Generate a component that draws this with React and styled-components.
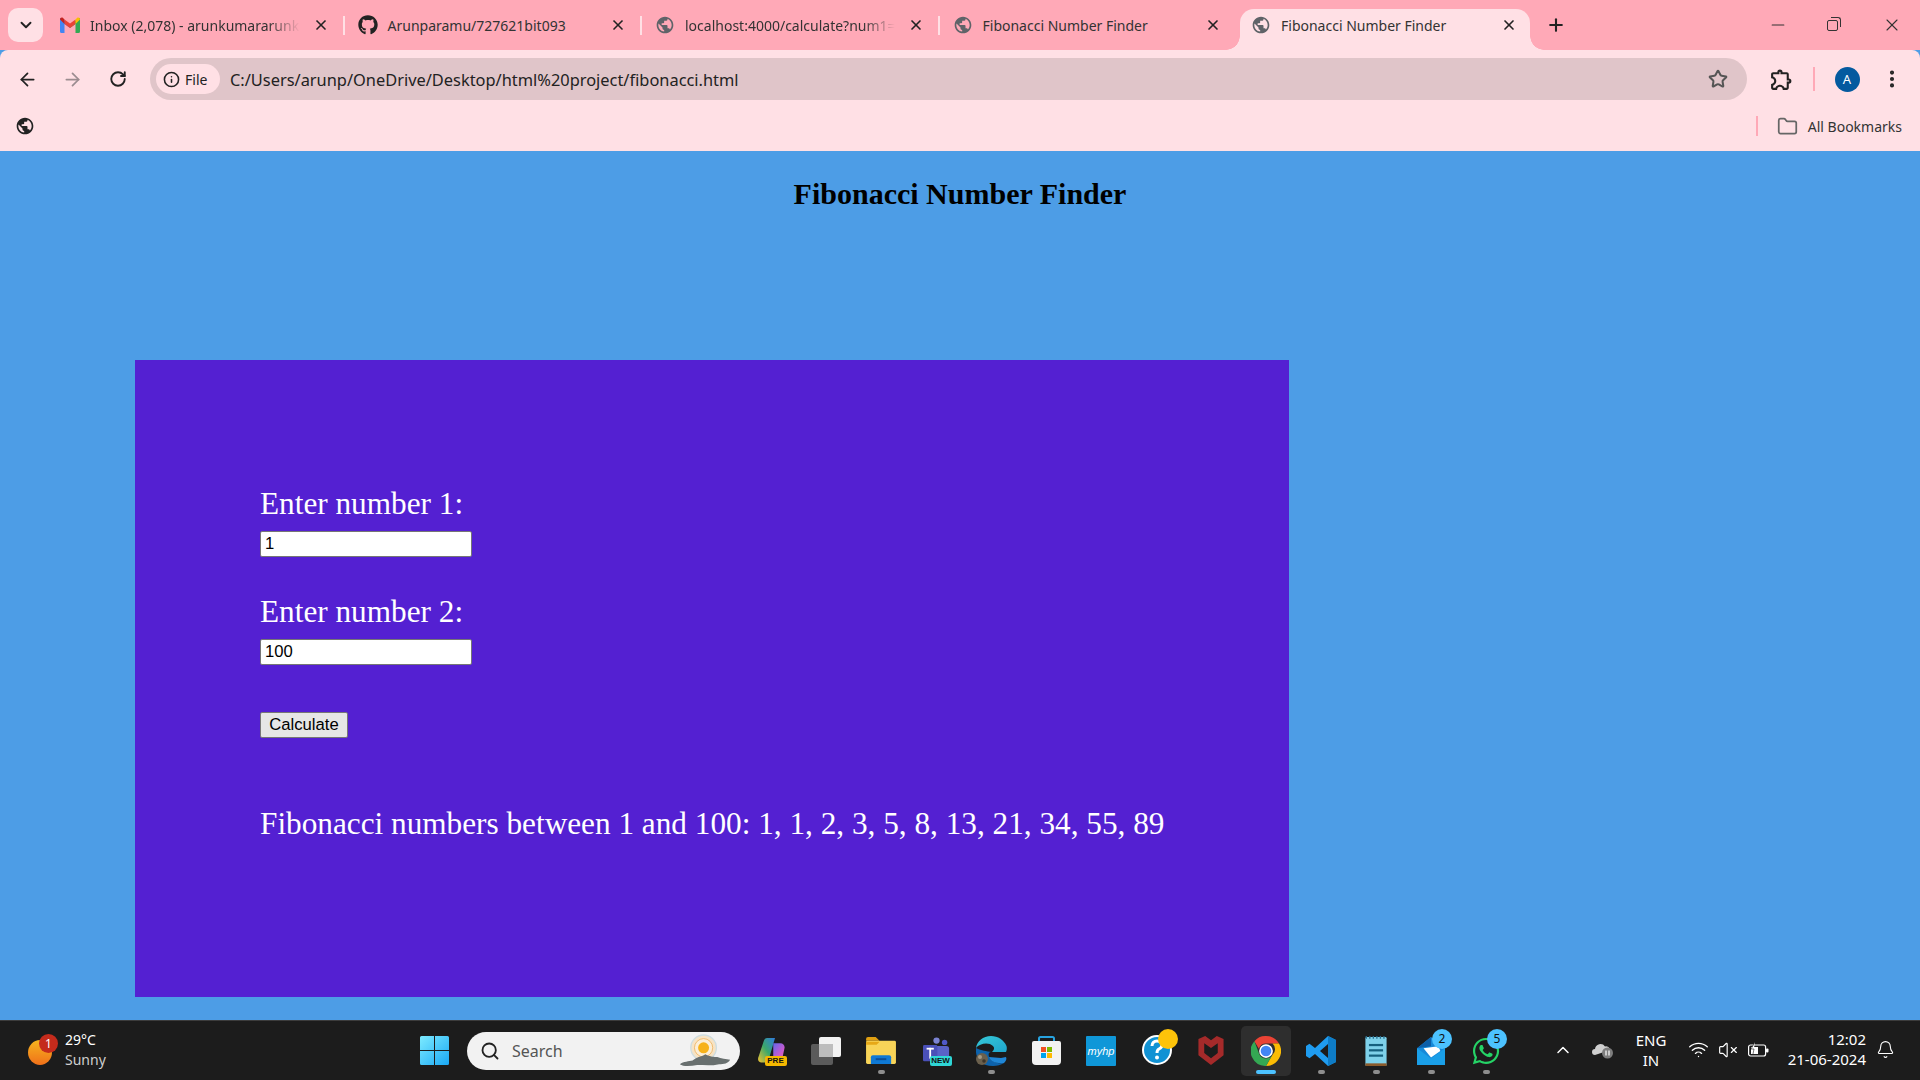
import React from 'react';
import styled, { createGlobalStyle } from 'styled-components';
import {
  ArrowLeft, ArrowRight, RotateCw, Info, Star, EllipsisVertical, X, Plus, Minus,
  ChevronDown, ChevronUp, Folder, Search, Wifi, VolumeX, Bell,
} from 'lucide-react';
import { MdPublic, MdOutlineExtension } from 'react-icons/md';
import { FaGithub, FaWhatsapp } from 'react-icons/fa';

const STRIP = '#ffa9b7';
const TOOLBAR = '#ffe0e5';

const GlobalStyle = createGlobalStyle`
  html, body {
    margin: 0;
    height: 100%;
    overflow: hidden;
  }
  * { box-sizing: border-box; }
`;

const Screen = styled.div`
  display: flex;
  flex-direction: column;
  width: 1920px;
  height: 1080px;
  font-family: "Noto Sans", "Open Sans", sans-serif;
  background: #4d9de6;
`;

const TabStrip = styled.div`
  display: flex;
  align-items: flex-end;
  height: 50px;
  padding-left: 8px;
  background: ${STRIP};
`;

const TabSearch = styled.div`
  display: flex;
  align-items: center;
  justify-content: center;
  align-self: flex-start;
  width: 35px;
  height: 34px;
  margin: 8px 4px 0 0;
  border-radius: 10px;
  background: ${TOOLBAR};
  color: #222;
`;

const Tab = styled.div`
  position: relative;
  display: flex;
  align-items: center;
  width: ${p => (p.$active ? '290px' : '297.5px')};
  height: 41px;
  margin-left: ${p => (p.$active ? '3px' : '0')};
  padding: 0 ${p => (p.$active ? '13px' : '16px')} 9px ${p => (p.$active ? '11px' : '13px')};
  border-radius: ${p => (p.$active ? '14px 14px 0 0' : '0')};
  background: ${p => (p.$active ? TOOLBAR : 'transparent')};
  color: #333;
  font-size: 14px;

  ${p => p.$sep && `
    &::after {
      content: '';
      position: absolute;
      top: 7px;
      right: 0;
      width: 2px;
      height: 19px;
      background: ${TOOLBAR};
    }
  `}

  ${p => p.$active && `
    &::before, &::after {
      content: '';
      position: absolute;
      bottom: 0;
      width: 14px;
      height: 14px;
    }
    &::before {
      left: -14px;
      background: radial-gradient(circle at 0 0, transparent 13.5px, ${TOOLBAR} 14px);
    }
    &::after {
      right: -14px;
      background: radial-gradient(circle at 100% 0, transparent 13.5px, ${TOOLBAR} 14px);
    }
  `}
`;

const TabIcon = styled.span`
  display: flex;
  flex: none;
  width: 20px;
  margin-right: 10px;
  color: #5f6368;
`;

const TabLabel = styled.span`
  flex: 1;
  white-space: nowrap;
  ${p => p.$fade && `
    mask-image: linear-gradient(to right, #000 178px, transparent 210px);
  `}
`;

const TabClose = styled.span`
  display: flex;
  flex: none;
  width: 16px;
  margin-left: 8px;
  color: #222;
`;

const NewTab = styled.div`
  display: flex;
  align-self: center;
  margin: 0 0 0 16px;
  color: #222;
`;

const WindowControls = styled.div`
  display: flex;
  align-self: flex-start;
  margin-left: auto;
  padding-top: 15px;
`;

const WindowButton = styled.div`
  display: flex;
  justify-content: center;
  width: 57px;
  color: #333;
`;

const RestoreIcon = styled.div`
  position: relative;
  width: 11px;
  height: 11px;
  margin: 5px 4px 0 0;
  border: 1px solid #333;
  border-radius: 2px;

  &::after {
    content: '';
    position: absolute;
    top: -4px;
    right: -4px;
    width: 9px;
    height: 9px;
    border-top: 1px solid #333;
    border-right: 1px solid #333;
    border-radius: 0 3px 0 0;
  }
`;

const Toolbar = styled.div`
  display: flex;
  align-items: center;
  height: 54px;
  padding: 8px 17px 4px 4.5px;
  border-radius: 8px 8px 0 0;
  background: ${TOOLBAR};
`;

const NavButton = styled.div`
  display: flex;
  justify-content: center;
  width: 45.5px;
  color: ${p => (p.$off ? '#9b8c90' : '#222')};
`;

const Omnibox = styled.div`
  display: flex;
  align-items: center;
  flex: 1;
  height: 42px;
  margin-left: 9px;
  padding: 0 19px 0 6px;
  border-radius: 21px;
  background: #e0c5c9;
  color: #222;
  font-size: 16.4px;
`;

const SiteChip = styled.div`
  display: flex;
  align-items: center;
  gap: 5px;
  width: 64px;
  height: 30px;
  margin-right: 10px;
  padding-left: 7px;
  border-radius: 15px;
  background: ${TOOLBAR};
  font-size: 14px;
`;

const Url = styled.span`
  flex: 1;
  white-space: nowrap;
`;

const ToolIcon = styled.div`
  display: flex;
  justify-content: center;
  width: 44px;
  margin-left: 12px;
  color: #222;
`;

const Divider = styled.div`
  flex: none;
  width: 2px;
  height: ${p => p.$h || 24}px;
  margin-left: ${p => p.$ml || 0};
  background: ${STRIP};
`;

const Avatar = styled.div`
  display: flex;
  align-items: center;
  justify-content: center;
  width: 25px;
  height: 25px;
  margin: 0 21.5px 0 19.5px;
  border-radius: 50%;
  background: #045a9f;
  color: #fff;
  font-size: 13px;
`;

const Dots = styled.div`
  display: flex;
  color: #222;
`;

const BookmarksBar = styled.div`
  display: flex;
  align-items: center;
  height: 47px;
  padding: 0 18px 3px 15px;
  background: ${TOOLBAR};
  color: #333;
  font-size: 14px;
`;

const BookmarkGlobe = styled.div`
  display: flex;
  color: #222;
`;

const AllBookmarks = styled.div`
  display: flex;
  align-items: center;
  gap: 10px;
  margin-left: 19px;
  color: #333;
`;

const Page = styled.main`
  flex: 1;
  min-height: 0;
  background: #4d9de6;
  font-family: "Liberation Serif", "Times New Roman", serif;
`;

const Title = styled.h1`
  margin: 0;
  padding-top: 25px;
  color: #000;
  font-size: 30px;
  font-weight: 700;
  line-height: 35px;
  text-align: center;
`;

const Panel = styled.form`
  width: 1154px;
  height: 637px;
  margin: 149px 0 0 135px;
  padding: 126px 0 0 125px;
  background: #5420d2;
  color: #fff;
`;

const FieldLabel = styled.label`
  display: block;
  font-size: 31.25px;
  line-height: 36px;
`;

const NumberInput = styled.input`
  display: block;
  width: 212px;
  height: 26px;
  margin: 9px 0 37px;
  padding: 0 4px;
  border: 1px solid #767676;
  border-radius: 2px;
  background: #fff;
  color: #000;
  font-family: "Liberation Sans", Arial, sans-serif;
  font-size: 16.67px;
`;

const CalcButton = styled.button`
  display: block;
  width: 88px;
  height: 26px;
  margin-top: 47px;
  padding: 0;
  border: 1px solid #767676;
  border-radius: 2px;
  background: #e6e6e6;
  color: #000;
  font-family: "Liberation Sans", Arial, sans-serif;
  font-size: 16.67px;
`;

const Result = styled.p`
  margin: 67px 0 0;
  font-size: 31.25px;
  line-height: 37px;
  white-space: nowrap;
`;

const Taskbar = styled.footer`
  display: flex;
  align-items: center;
  flex: none;
  height: 60px;
  border-top: 1px solid #3c3c3c;
  background: #1c1c1c;
  color: #fff;
  font-family: "Noto Sans", "Open Sans", sans-serif;
`;

const Weather = styled.div`
  display: flex;
  align-items: center;
  width: 420px;
  padding-left: 28px;
`;

const WeatherIcon = styled.div`
  position: relative;
  flex: none;
  width: 24px;
  height: 25px;
  margin-top: 4px;
  margin-right: 13px;
  border-radius: 50%;
  background: linear-gradient(#f6b51e, #f0701a);
`;

const CountBadge = styled.span`
  position: absolute;
  top: ${p => p.$top}px;
  right: ${p => p.$right}px;
  display: flex;
  align-items: center;
  justify-content: center;
  width: ${p => p.$size}px;
  height: ${p => p.$size}px;
  border-radius: 50%;
  background: ${p => p.$bg};
  color: ${p => p.$fg};
  font-size: 12px;
  line-height: 1;
`;

const WeatherText = styled.div`
  margin-bottom: 2px;
  font-size: 14px;
  line-height: 20px;
`;

const WeatherSub = styled.div`
  color: #cfcfcf;
`;

const StartButton = styled.div`
  display: flex;
  flex: none;
  width: 47px;
`;

const SearchBox = styled.div`
  display: flex;
  align-items: center;
  flex: none;
  width: 273px;
  height: 38px;
  padding: 0 9px 0 13px;
  border-radius: 19px;
  background: #f2f2f2;
  color: #555;
  font-size: 16px;
`;

const SearchIcon = styled.div`
  display: flex;
  margin-right: 12px;
  color: #222;
`;

const SearchArt = styled.div`
  display: flex;
  margin-left: auto;
`;

const TaskIcons = styled.div`
  display: flex;
  margin-left: 3.5px;
`;

const TaskItem = styled.div`
  position: relative;
  display: flex;
  align-items: center;
  justify-content: center;
  width: 55px;
  height: 52px;
  padding: ${p => (p.$raised ? '0 0 7px 7px' : '0')};

  ${p => p.$active && `
    &::before {
      content: '';
      position: absolute;
      inset: 1px 2.5px;
      border-radius: 5px;
      background: #2e2e2e;
    }
  `}

  & > svg { position: relative; }
`;

const RunDot = styled.span`
  position: absolute;
  bottom: 3px;
  left: 50%;
  width: ${p => (p.$active ? 20 : 7)}px;
  height: 4px;
  margin-left: ${p => (p.$active ? -10 : -3.5)}px;
  border-radius: 2px;
  background: ${p => (p.$active ? '#4cc2ff' : '#8e8e8e')};
`;

const TagLabel = styled.span`
  position: absolute;
  right: 12px;
  bottom: 11px;
  width: 22px;
  border-radius: 2px;
  background: ${p => p.$bg};
  color: #111;
  font-family: "Liberation Sans", Arial, sans-serif;
  font-size: 8px;
  font-weight: 700;
  line-height: 10px;
  text-align: center;
`;

const MyHpText = styled.span`
  position: absolute;
  color: #fff;
  font-family: "Liberation Sans", Arial, sans-serif;
  font-size: 11px;
  font-style: italic;
`;

const Tray = styled.div`
  display: flex;
  align-items: center;
  margin-left: auto;
  padding-right: 16px;
`;

const TrayCell = styled.div`
  display: flex;
  flex-direction: column;
  align-items: ${p => (p.$end ? 'flex-end' : 'center')};
  justify-content: center;
  width: ${p => p.$w}px;
  margin-bottom: ${p => (p.$end ? 4 : 2)}px;
  font-size: 15px;
  line-height: 20px;
`;

const GmailIcon = () => (
  <svg width="20" height="16" viewBox="0 0 20 16">
    <path d="M0 2.5v12A1.5 1.5 0 0 0 1.500 16H4.500V7L10 11V8L1.500 1.200A1 1 0 0 0 0 2.500z" fill="#4285f4" />
    <path d="M20 2.500v12a1.500 1.500 0 0 1-1.500 1.500H15.500V7L10 11V8l8.500-6.800A1 1 0 0 1 20 2.500z" fill="#34a853" />
    <path d="M4.500 7 10 11l5.500-4V2.500L10 6.500 4.500 2.500z" fill="#ea4335" />
    <path d="M0 2.500 4.500 7V2.500L2.800.8C1.500-.2 0 .8 0 2.500z" fill="#c5221f" />
    <path d="M20 2.500 15.500 7V2.500l1.700-1.700C18.500-.2 20 .8 20 2.500z" fill="#fbbc04" />
  </svg>
);

const WindowsLogo = () => (
  <svg width="29" height="29" viewBox="0 0 29 29">
    <defs>
      <linearGradient id="winA" x1="0" y1="0" x2="1" y2="1">
        <stop offset="0" stopColor="#7debff" />
        <stop offset="1" stopColor="#1aa8f5" />
      </linearGradient>
    </defs>
    <path d="M0 1.500A1.500 1.500 0 0 1 1.500 0H14v14H0zM15 0h12.500A1.500 1.500 0 0 1 29 1.500V14H15zM0 15h14v14H1.500A1.500 1.500 0 0 1 0 27.500zM15 15h14v12.500a1.500 1.500 0 0 1-1.500 1.500H15z" fill="url(#winA)" />
  </svg>
);

const SunArt = () => (
  <svg width="53" height="33" viewBox="0 0 58 36">
    <circle cx="28" cy="15" r="14" fill="#f7e3c4" stroke="#cfdde0" strokeWidth="1.500" />
    <circle cx="28" cy="15" r="10" fill="#fbeed7" stroke="#f0b765" strokeWidth="1" />
    <circle cx="28" cy="15" r="6" fill="#f6b21b" />
    <path d="M2 33c4-3 10-3 14-4 4-4 9-4 14-7 5 3 10 3 13 3 4 2 10 2 14 3-2 4-7 5-12 5-8 2-16 1-24 1-7 1-15 2-19-1z" fill="#69706f" />
  </svg>
);

const CopilotIcon = () => (
  <svg width="27" height="28" viewBox="0 0 30 32">
    <defs>
      <linearGradient id="copA" x1="0" y1="1" x2="1" y2="0">
        <stop offset="0" stopColor="#f2c230" />
        <stop offset="0.5" stopColor="#3ba86b" />
        <stop offset="1" stopColor="#2f7be0" />
      </linearGradient>
      <linearGradient id="copB" x1="0" y1="0" x2="1" y2="1">
        <stop offset="0" stopColor="#4a6bf0" />
        <stop offset="0.6" stopColor="#c55ad0" />
        <stop offset="1" stopColor="#f0699a" />
      </linearGradient>
    </defs>
    <path d="M10 1h9l-7 24c-1 3-3 4-5 4H3C0 29-1 26 0 23L6 5c1-3 2-4 4-4z" fill="url(#copA)" />
    <path d="M17 7h8c3 0 5 2 5 5l-3 14c-1 3-3 4-6 4h-8c2-1 3-3 4-6z" fill="url(#copB)" />
  </svg>
);

const TaskViewIcon = () => (
  <svg width="30" height="28" viewBox="0 0 30 28">
    <rect x="0" y="7" width="22" height="21" rx="2" fill="#5b5b5b" />
    <rect x="8" y="0" width="22" height="20" rx="2" fill="#f2f2f2" />
    <rect x="8" y="7" width="14" height="13" fill="#bdbdbd" />
  </svg>
);

const ExplorerIcon = () => (
  <svg width="30" height="27" viewBox="0 0 31 28">
    <path d="M0 2a2 2 0 0 1 2-2h8l4 4h-14z" fill="#e0a012" />
    <rect x="0" y="4" width="31" height="24" rx="1.500" fill="#f8d458" />
    <path d="M0 5h14l-3 3H0z" fill="#e6a817" />
    <path d="M5 28v-7a2 2 0 0 1 2-2h17a2 2 0 0 1 2 2v7z" fill="#0f79d4" />
    <rect x="10" y="22" width="11" height="2" fill="#0a4f98" />
  </svg>
);

const TeamsIcon = () => (
  <svg width="27" height="27" viewBox="0 0 30 30">
    <circle cx="15" cy="4" r="3.500" fill="#7b83d3" />
    <circle cx="24" cy="6" r="3" fill="#5059c9" />
    <rect x="12" y="10" width="17" height="18" rx="3" fill="#5a62c8" />
    <rect x="0" y="9" width="16" height="18" rx="1.500" fill="#4a50b8" />
    <rect x="4" y="12" width="8" height="2" fill="#fff" />
    <rect x="7" y="12" width="2" height="12" fill="#fff" />
  </svg>
);

const EdgeIcon = () => (
  <svg width="31" height="30" viewBox="0 0 31 30">
    <defs>
      <linearGradient id="edgeA" x1="0" y1="0" x2="1" y2="1">
        <stop offset="0" stopColor="#36c9d8" />
        <stop offset="1" stopColor="#1fa5cc" />
      </linearGradient>
    </defs>
    <path d="M15 0C7 0 1 5 0 12c4-5 13-6 17-2 2 2 1 4-1 6h14c1-2 1-4 .5-6C28 4 22 0 15 0z" fill="url(#edgeA)" />
    <path d="M0 12c-1 9 4 18 17 18 4 0 8-1 11-3-6 1-13-1-15-6-1-4 0-5 3-5-6-1-10-1-16-4z" fill="#0d62ab" />
    <path d="M13 21c1 4 7 7 15 6 2-2 3-4 2-6l-5 1c-4 0-8-1-12-1z" fill="#1f86d6" />
    <circle cx="6" cy="23" r="6" fill="#6b604d" />
    <circle cx="4" cy="21" r="2" fill="#a59a85" />
    <circle cx="8" cy="25" r="1.800" fill="#3d352a" />
  </svg>
);

const StoreIcon = () => (
  <svg width="29" height="29" viewBox="0 0 29 29">
    <path d="M7 6V2.500A1.500 1.500 0 0 1 8.500 1h12A1.500 1.500 0 0 1 22 2.500V6" fill="none" stroke="#27a3e0" strokeWidth="2" />
    <path d="M0 7a2 2 0 0 1 2-2h25a2 2 0 0 1 2 2v18a4 4 0 0 1-4 4H4a4 4 0 0 1-4-4z" fill="#f2f2f2" />
    <rect x="9" y="11" width="5" height="5" fill="#f25022" />
    <rect x="15" y="11" width="5" height="5" fill="#7fba00" />
    <rect x="9" y="17" width="5" height="5" fill="#00a4ef" />
    <rect x="15" y="17" width="5" height="5" fill="#ffb900" />
  </svg>
);

const HelpIcon = () => (
  <svg width="36" height="36" viewBox="0 0 36 36">
    <circle cx="15" cy="21" r="14" fill="#1192d4" stroke="#fff" strokeWidth="2" />
    <path d="M10 17c0-3 2-5 5-5s5 2 5 4-1 3-3 4-2 2-2 4" fill="none" stroke="#fff" strokeWidth="3" />
    <circle cx="15" cy="28.500" r="2" fill="#fff" />
    <circle cx="26" cy="10" r="10" fill="#fdc30a" />
  </svg>
);

const McAfeeIcon = () => (
  <svg width="26" height="29" viewBox="0 0 26 30">
    <path d="M0 3l7-3 6 4.500L19 0l7 3v17l-13 10L0 20zM6 7.500v10L13 23l7-5.500v-10L13 12.500z" fill="#a52a2a" />
  </svg>
);

const ChromeIcon = () => (
  <svg width="30" height="30" viewBox="0 0 48 48">
    <path d="M24 0a24 24 0 0 1 20.800 12H24a12 12 0 0 0-11.400 8.200L5.400 8.200A24 24 0 0 1 24 0z" fill="#ea4335" />
    <path d="M44.800 12A24 24 0 0 1 24 48l10.400-18a12 12 0 0 0 0-18z" fill="#fbbc04" />
    <path d="M5.400 8.200A24 24 0 0 0 24 48l10.400-18A12 12 0 0 1 13.600 30z" fill="#34a853" />
    <circle cx="24" cy="24" r="11" fill="#fff" />
    <circle cx="24" cy="24" r="8.500" fill="#4285f4" />
  </svg>
);

const VsCodeIcon = () => (
  <svg width="30" height="30" viewBox="0 0 30 30">
    <path d="M22 0l8 4v22l-8 4-13-12-5.500 4.200L0 20v-10l3.500-2.200L9 12zM22 8l-8 7 8 7z" fill="#1f9cf0" />
    <path d="M22 0l8 4v22l-8 4z" fill="#0e7cc6" />
  </svg>
);

const NotepadIcon = () => (
  <svg width="22" height="30" viewBox="0 0 24 34">
    <rect x="0" y="1" width="24" height="33" rx="1.500" fill="#7ed1ea" />
    <rect x="0" y="31" width="24" height="3" fill="#8a5a2b" />
    <path d="M1 0v3M5 0v3M9 0v3M13 0v3M17 0v3M21 0v3" stroke="#2a6f8f" strokeWidth="1.500" />
    <rect x="4" y="9" width="16" height="2.500" fill="#15607e" />
    <rect x="4" y="15" width="16" height="2.500" fill="#15607e" />
    <rect x="4" y="21" width="16" height="2.500" fill="#15607e" />
  </svg>
);

const MailIcon = () => (
  <svg width="30" height="28" viewBox="0 0 30 30">
    <path d="M15 0L0 12v18h30V12z" fill="#1689d8" />
    <path d="M0 12L15 0v10z" fill="#0c5fa8" />
    <path d="M7 12l16-2 2 5-10 7z" fill="#fff" />
    <path d="M0 12l15 11 15-11v18H0z" fill="#1a9fe8" />
  </svg>
);

const App = () => (
  <Screen>
    <GlobalStyle />
    <TabStrip>
      <TabSearch><ChevronDown size={18} strokeWidth={2.5} /></TabSearch>
      <Tab $sep>
        <TabIcon><GmailIcon /></TabIcon>
        <TabLabel $fade>Inbox (2,078) - arunkumararunk</TabLabel>
        <TabClose><X size={16} strokeWidth={2.5} /></TabClose>
      </Tab>
      <Tab $sep>
        <TabIcon><FaGithub size={20} color="#222" /></TabIcon>
        <TabLabel>Arunparamu/727621bit093</TabLabel>
        <TabClose><X size={16} strokeWidth={2.5} /></TabClose>
      </Tab>
      <Tab $sep>
        <TabIcon><MdPublic size={20} /></TabIcon>
        <TabLabel $fade>localhost:4000/calculate?num1=</TabLabel>
        <TabClose><X size={16} strokeWidth={2.5} /></TabClose>
      </Tab>
      <Tab>
        <TabIcon><MdPublic size={20} /></TabIcon>
        <TabLabel>Fibonacci Number Finder</TabLabel>
        <TabClose><X size={16} strokeWidth={2.5} /></TabClose>
      </Tab>
      <Tab $active>
        <TabIcon><MdPublic size={20} /></TabIcon>
        <TabLabel>Fibonacci Number Finder</TabLabel>
        <TabClose><X size={16} strokeWidth={2.5} /></TabClose>
      </Tab>
      <NewTab><Plus size={20} strokeWidth={2.5} /></NewTab>
      <WindowControls>
        <WindowButton><Minus size={20} strokeWidth={1.3} /></WindowButton>
        <WindowButton><RestoreIcon /></WindowButton>
        <WindowButton><X size={20} strokeWidth={1.3} /></WindowButton>
      </WindowControls>
    </TabStrip>

    <Toolbar>
      <NavButton><ArrowLeft size={21} /></NavButton>
      <NavButton $off><ArrowRight size={21} /></NavButton>
      <NavButton><RotateCw size={18} strokeWidth={2.5} /></NavButton>
      <Omnibox>
        <SiteChip><Info size={17} strokeWidth={2.2} />File</SiteChip>
        <Url>C:/Users/arunp/OneDrive/Desktop/html%20project/fibonacci.html</Url>
        <Star size={20} color="#555" strokeWidth={2.4} />
      </Omnibox>
      <ToolIcon><MdOutlineExtension size={25} /></ToolIcon>
      <Divider $ml="10px" />
      <Avatar>A</Avatar>
      <Dots><EllipsisVertical size={22} strokeWidth={2.5} /></Dots>
    </Toolbar>

    <BookmarksBar>
      <BookmarkGlobe><MdPublic size={20} /></BookmarkGlobe>
      <Divider $h={20} $ml="auto" />
      <AllBookmarks><Folder size={21} color="#666" strokeWidth={2} />All Bookmarks</AllBookmarks>
    </BookmarksBar>

    <Page>
      <Title>Fibonacci Number Finder</Title>
      <Panel>
        <FieldLabel htmlFor="num1">Enter number 1:</FieldLabel>
        <NumberInput id="num1" defaultValue="1" />
        <FieldLabel htmlFor="num2">Enter number 2:</FieldLabel>
        <NumberInput id="num2" defaultValue="100" />
        <CalcButton type="button">Calculate</CalcButton>
        <Result>Fibonacci numbers between 1 and 100: 1, 1, 2, 3, 5, 8, 13, 21, 34, 55, 89</Result>
      </Panel>
    </Page>

    <Taskbar>
      <Weather>
        <WeatherIcon>
          <CountBadge $top={-6} $right={-6} $size={19} $bg="#c42b1c" $fg="#fff">1</CountBadge>
        </WeatherIcon>
        <WeatherText>
          29°C
          <WeatherSub>Sunny</WeatherSub>
        </WeatherText>
      </Weather>
      <StartButton><WindowsLogo /></StartButton>
      <SearchBox>
        <SearchIcon><Search size={20} strokeWidth={2.2} /></SearchIcon>
        Search
        <SearchArt><SunArt /></SearchArt>
      </SearchBox>
      <TaskIcons>
        <TaskItem><CopilotIcon /><TagLabel $bg="#f5b800">PRE</TagLabel></TaskItem>
        <TaskItem><TaskViewIcon /></TaskItem>
        <TaskItem><ExplorerIcon /><RunDot /></TaskItem>
        <TaskItem><TeamsIcon /><TagLabel $bg="#2fd6d6">NEW</TagLabel></TaskItem>
        <TaskItem><EdgeIcon /><RunDot /></TaskItem>
        <TaskItem><StoreIcon /></TaskItem>
        <TaskItem>
          <svg width="30" height="30" viewBox="0 0 30 30"><rect width="30" height="30" rx="1" fill="#0f97d8" /></svg>
          <MyHpText>myhp</MyHpText>
        </TaskItem>
        <TaskItem $raised><HelpIcon /></TaskItem>
        <TaskItem><McAfeeIcon /></TaskItem>
        <TaskItem $active><ChromeIcon /><RunDot $active /></TaskItem>
        <TaskItem><VsCodeIcon /><RunDot /></TaskItem>
        <TaskItem><NotepadIcon /><RunDot /></TaskItem>
        <TaskItem>
          <MailIcon /><RunDot />
          <CountBadge $top={4} $right={6.5} $size={20} $bg="#4cc2ff" $fg="#111">2</CountBadge>
        </TaskItem>
        <TaskItem>
          <FaWhatsapp size={30} color="#25d366" /><RunDot />
          <CountBadge $top={4} $right={6.5} $size={20} $bg="#4cc2ff" $fg="#111">5</CountBadge>
        </TaskItem>
      </TaskIcons>
      <Tray>
        <TrayCell $w={40}><ChevronUp size={20} strokeWidth={1.8} /></TrayCell>
        <TrayCell $w={40}>
          <svg width="22" height="18" viewBox="0 0 22 18">
            <path d="M3 14a3 3 0 0 1 0-6 5.500 5.500 0 0 1 10-2.500 4 4 0 0 1 5 3.500z" fill="#cfcfcf" />
            <circle cx="15.500" cy="12" r="5.500" fill="#7d7d7d" />
            <path d="M14 9.500v5M17 9.500v5" stroke="#fff" strokeWidth="1.200" />
          </svg>
        </TrayCell>
        <TrayCell $w={56}><span>ENG</span><span>IN</span></TrayCell>
        <TrayCell $w={38}><Wifi size={21} strokeWidth={1.6} /></TrayCell>
        <TrayCell $w={22}><VolumeX size={20} strokeWidth={1.4} /></TrayCell>
        <TrayCell $w={38}>
          <svg width="21" height="16" viewBox="0 0 21 16">
            <rect x="0.600" y="3" width="17" height="11" rx="2" fill="none" stroke="#fff" strokeWidth="1.200" />
            <rect x="18" y="6.500" width="2.500" height="4" rx="1" fill="#fff" />
            <rect x="3" y="5" width="7" height="7" fill="#fff" />
            <path d="M7 0L3 7h3l-1 5" fill="#fff" stroke="#1c1c1c" strokeWidth="0.600" />
          </svg>
        </TrayCell>
        <TrayCell $w={89} $end><span>12:02</span><span>21-06-2024</span></TrayCell>
        <TrayCell $w={38}><Bell size={19} strokeWidth={1.4} /></TrayCell>
      </Tray>
    </Taskbar>
  </Screen>
);

export default App;
